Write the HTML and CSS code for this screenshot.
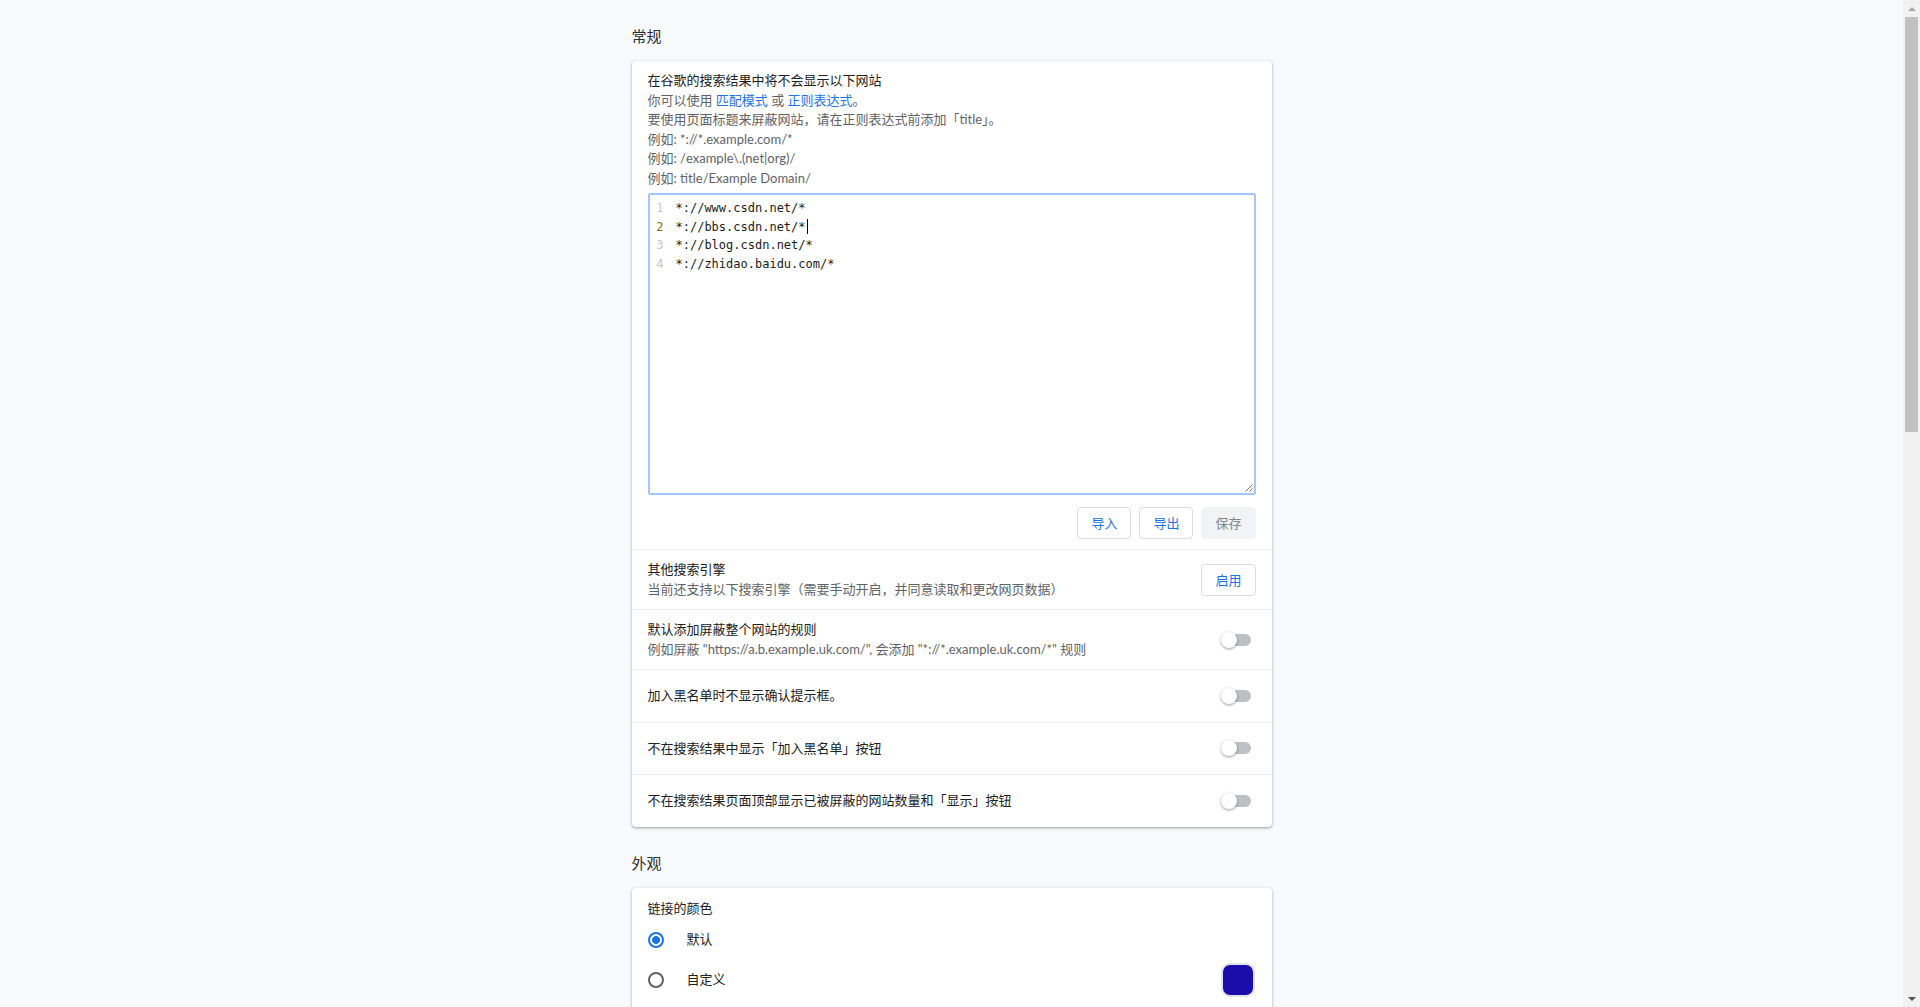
FILE: index.html
```html
<!DOCTYPE html>
<html lang="zh-CN">
<head>
<meta charset="utf-8">
<title>uBlacklist 选项</title>
<link rel="stylesheet" href="styles.css">
</head>
<body>
<div class="viewport">
<main class="page">
  <section class="section">
    <h2 class="section-title">常规</h2>
    <div class="card">
      <div class="ruleset">
        <div class="intro">
          <p class="primary">在谷歌的搜索结果中将不会显示以下网站</p>
          <p>你可以使用 <a href="#">匹配模式</a> 或 <a href="#">正则表达式</a>。</p>
          <p>要使用页面标题来屏蔽网站，请在正则表达式前添加「title」。</p>
          <p>例如: *://*.example.com/*</p>
          <p>例如: /example\.(net|org)/</p>
          <p>例如: title/Example Domain/</p>
        </div>
        <div class="editor">
          <div class="editor-line"><span class="gutter">1</span><span class="code">*://www.csdn.net/*</span></div>
          <div class="editor-line active"><span class="gutter">2</span><span class="code">*://bbs.csdn.net/*<span class="cursor"></span></span></div>
          <div class="editor-line"><span class="gutter">3</span><span class="code">*://blog.csdn.net/*</span></div>
          <div class="editor-line"><span class="gutter">4</span><span class="code">*://zhidao.baidu.com/*</span></div>
          <svg class="resize-handle" width="10" height="10" viewBox="0 0 10 10"><path d="M9.5 2.5 L2.5 9.5 M9.5 6.5 L6.5 9.5" stroke="#6f6f6f" stroke-width="1" fill="none"/></svg>
        </div>
        <div class="actions">
          <button class="btn">导入</button>
          <button class="btn">导出</button>
          <button class="btn" disabled>保存</button>
        </div>
      </div>
      <div class="row">
        <div class="row-text">
          <div class="row-title">其他搜索引擎</div>
          <div class="row-sub">当前还支持以下搜索引擎（需要手动开启，并同意读取和更改网页数据）</div>
        </div>
        <button class="btn">启用</button>
      </div>
      <div class="row">
        <div class="row-text">
          <div class="row-title">默认添加屏蔽整个网站的规则</div>
          <div class="row-sub">例如屏蔽 "https://a.b.example.uk.com/", 会添加 "*://*.example.uk.com/*" 规则</div>
        </div>
        <span class="toggle"><span class="toggle-bar"></span><span class="toggle-knob"></span></span>
      </div>
      <div class="row">
        <div class="row-text">
          <div class="row-title">加入黑名单时不显示确认提示框。</div>
        </div>
        <span class="toggle"><span class="toggle-bar"></span><span class="toggle-knob"></span></span>
      </div>
      <div class="row">
        <div class="row-text">
          <div class="row-title">不在搜索结果中显示「加入黑名单」按钮</div>
        </div>
        <span class="toggle"><span class="toggle-bar"></span><span class="toggle-knob"></span></span>
      </div>
      <div class="row">
        <div class="row-text">
          <div class="row-title">不在搜索结果页面顶部显示已被屏蔽的网站数量和「显示」按钮</div>
        </div>
        <span class="toggle"><span class="toggle-bar"></span><span class="toggle-knob"></span></span>
      </div>
    </div>
  </section>

  <section class="section">
    <h2 class="section-title">外观</h2>
    <div class="card card-open">
      <div class="group">
        <div class="card-label">链接的颜色</div>
        <label class="radio-row"><span class="radio checked"></span><span class="radio-label">默认</span></label>
        <label class="radio-row"><span class="radio"></span><span class="radio-label">自定义</span><span class="swatch"></span></label>
      </div>
    </div>
  </section>
</main>
</div>
<div class="scrollbar" aria-hidden="true">
  <span class="sb-arrow"><span class="sb-tri sb-up"></span></span>
  <div class="sb-track"><div class="sb-thumb"></div></div>
  <span class="sb-arrow"><span class="sb-tri sb-down"></span></span>
</div>
</body>
</html>
```

FILE: styles.css
```css
* {
  box-sizing: border-box;
}

html {
  background: #f8f9fa;
}

body {
  display: flex;
  height: 100vh;
  margin: 0;
  overflow: hidden;
  font-family: "Lato", "Noto Sans CJK SC", sans-serif;
  font-size: 13px;
  line-height: 1.5;
  color: #202124;
}

.viewport {
  flex: 1;
  min-width: 0;
  overflow: hidden;
}

.page {
  width: 640px;
  margin: 0 auto;
}

.section-title {
  margin: 0;
  padding: 26px 0 15px;
  font-size: 15px;
  font-weight: 400;
  line-height: 20px;
  color: #2d2e31;
}

.card {
  background: #fff;
  border-radius: 4px;
  box-shadow: 0 1px 2px 0 rgba(60, 64, 67, 0.3), 0 1px 3px 1px rgba(60, 64, 67, 0.15);
}

.card-open {
  padding-bottom: 60px;
}

.ruleset {
  padding: 10px 16px 10px;
}

.intro p {
  margin: 0;
  color: #5f6368;
}

.intro .primary {
  color: #202124;
}

.intro a {
  color: #1a73e8;
  text-decoration: none;
}

.editor {
  position: relative;
  margin-top: 5px;
  height: 302px;
  padding: 4px 0;
  border: 2px solid #a6c6fb;
  border-radius: 2px;
  background: #fff;
  font-family: "DejaVu Sans Mono", "Liberation Mono", monospace;
  font-size: 12px;
  line-height: 18.5px;
}

.editor-line {
  display: flex;
  white-space: pre;
}

.gutter {
  width: 14px;
  text-align: right;
  color: #c6c6c6;
}

.editor-line.active .gutter {
  color: #7c6f0a;
}

.code {
  padding-left: 12px;
  color: #1b1b1b;
}

.cursor {
  display: inline-block;
  width: 1px;
  height: 15px;
  margin-left: 1px;
  vertical-align: -3px;
  background: #000;
}

.resize-handle {
  position: absolute;
  right: 1px;
  bottom: 1px;
}

.actions {
  display: flex;
  justify-content: flex-end;
  gap: 8px;
  margin-top: 12px;
}

.btn {
  height: 32px;
  padding: 0 13px;
  border: 1px solid #dadce0;
  border-radius: 4px;
  background: #fff;
  color: #1a73e8;
  font-family: inherit;
  font-size: 13px;
  line-height: 30px;
}

.btn:disabled {
  background: #f1f3f4;
  border-color: #f1f3f4;
  color: #80868b;
}

.row {
  display: flex;
  align-items: center;
  gap: 16px;
  min-height: 52.5px;
  padding: 10px 16px;
  border-top: 1px solid #e8eaed;
}

.row-text {
  flex: 1;
}

.row-title {
  color: #202124;
}

.row-sub {
  color: #5f6368;
}

.toggle {
  position: relative;
  flex: none;
  width: 31px;
  height: 16px;
  margin-right: 4px;
}

.toggle-bar {
  display: block;
  width: 28px;
  height: 12px;
  margin: 2px 0 0 2px;
  border-radius: 6px;
  background: #bdc1c6;
}

.toggle-knob {
  position: absolute;
  left: 0;
  top: 0;
  width: 16px;
  height: 16px;
  border-radius: 50%;
  background: #fff;
  box-shadow: 0 1px 3px rgba(0, 0, 0, 0.4);
}

.card-label {
  padding: 11px 16px 2px;
}

.radio-row {
  display: flex;
  align-items: center;
  height: 40px;
  padding: 0 16px;
}

.radio {
  flex: none;
  width: 16px;
  height: 16px;
  border: 2px solid #5f6368;
  border-radius: 50%;
}

.radio.checked {
  border-color: #1a73e8;
  background: radial-gradient(circle, #1a73e8 0 3.6px, transparent 4.2px);
}

.radio-label {
  margin-left: 23px;
  color: #202124;
}

.swatch {
  flex: none;
  width: 34px;
  height: 34px;
  margin-left: auto;
  margin-right: 1px;
  border: 2px solid #e3e3e6;
  border-radius: 9px;
  background: #1a0dab;
}

/* window scrollbar */
.scrollbar {
  flex: none;
  display: flex;
  flex-direction: column;
  width: 17px;
  background: #f1f1f1;
}

.sb-arrow {
  flex: none;
  display: flex;
  align-items: center;
  justify-content: center;
  height: 17px;
}

.sb-tri {
  width: 0;
  height: 0;
  border-left: 4px solid transparent;
  border-right: 4px solid transparent;
}

.sb-up {
  border-bottom: 4px solid #a3a3a3;
}

.sb-down {
  border-top: 4px solid #505050;
}

.sb-track {
  flex: 1;
  padding: 0 2px;
}

.sb-thumb {
  height: 415px;
  background: #c1c1c1;
}
```
